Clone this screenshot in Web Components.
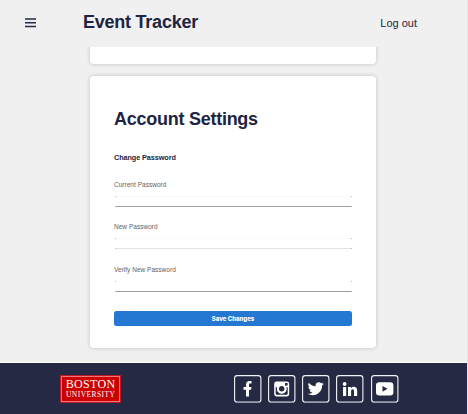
<!DOCTYPE html>
<html lang="en">
<head>
<meta charset="utf-8">
<title>Event Tracker</title>
<style>
html,body{margin:0;height:100%;overflow:hidden}
body{font-family:"Liberation Sans",Arial,sans-serif;color:#20243f;background:#f0f0f0}
</style>
</head>
<body>
<tracker-app></tracker-app>
<script>
function define(name, html, setup) {
  customElements.define(name, class extends HTMLElement {
    connectedCallback() {
      if (this.shadowRoot) return;
      this.attachShadow({mode: 'open'}).innerHTML = html;
      if (setup) setup(this, this.shadowRoot);
    }
  });
}

define('menu-icon', `<style>:host{display:block;width:11px;height:10px}svg{display:block}</style>
<svg width="11" height="10"><path d="M0 1h11M0 4.7h11M0 8.5h11" stroke="#252a46" stroke-width="1.6"/></svg>`);

define('top-bar', `<style>
:host{display:flex;align-items:center;box-sizing:border-box;height:47px;padding:0 50px 2px 25px;background:#f0f0f0}
h1{margin:0 auto 0 47px;font-size:18px;line-height:23px;letter-spacing:-.24px;white-space:nowrap}
a{font-size:11px;line-height:14px;white-space:nowrap}
</style><menu-icon></menu-icon><h1>Event Tracker</h1><a>Log out</a>`);

define('surface-card', `<style>
:host{display:block;box-sizing:border-box;width:286px;background:#fff;border-radius:4px;box-shadow:0 0 4px rgba(0,0,0,.2)}
</style><slot></slot>`);

define('password-field', `<style>
:host{display:block;height:42.7px}
label{display:block;font-size:6.5px;line-height:8px;letter-spacing:.02px;color:#636363;white-space:nowrap}
.box{box-sizing:border-box;height:11px;margin:7px 0 0 1px;border:solid;border-width:1px 0;border-color:var(--top,#f7f7f7) transparent var(--line,#a0a0a0);display:flex;flex-direction:column;justify-content:space-between}
.ends{display:flex;justify-content:space-between;margin-top:-1px}
.ends.low{margin:0 0 -1px}
i{width:1px;height:1px;background:#bbb}
</style><label></label><div class="box"><div class="ends"><i></i><i></i></div><div class="ends low"><i></i><i></i></div></div>`,
(el, root) => { root.querySelector('label').textContent = el.getAttribute('label'); });

define('save-button', `<style>
:host{display:block}
button{display:block;width:238px;height:15px;padding:1px 0 0;border:0;border-radius:2.5px;background:#2478d2;color:#fff;font:800 6px/14px Inter,sans-serif;}
</style><button><slot></slot></button>`);

define('account-form', `<style>
:host{display:block;padding:32px 24px 0}
h2{margin:0;font-size:18px;line-height:23px;letter-spacing:-.26px;white-space:nowrap}
h3{margin:21.500px 0 19px;font-size:7.3px;line-height:9px;letter-spacing:-.1px;white-space:nowrap}
.fields{height:130px}
</style><h2>Account Settings</h2><h3>Change Password</h3>
<div class="fields">
<password-field label="Current Password"></password-field>
<password-field label="New Password" style="--line:#e2e2e2;--top:#fafafa"></password-field>
<password-field label="Verify New Password" style="--top:#fff"></password-field>
</div><save-button>Save Changes</save-button>`);

define('university-logo', `<style>
:host{display:flex;flex-direction:column;align-items:center;box-sizing:border-box;width:61px;height:28px;background:#c00;border:1px solid #b91825;box-shadow:inset 0 0 0 1px #ef7777;color:#fff;font-family:"Liberation Serif",serif;white-space:nowrap}
b,span{font-weight:400;display:block}
b{font-size:12px;line-height:12px;margin-top:2px;letter-spacing:.35px;margin-right:-.35px}
span{font-size:7.5px;line-height:8px;margin-top:1px;letter-spacing:.45px;margin-right:-.45px}
</style><b>BOSTON</b><span>UNIVERSITY</span>`);

const glyphs = {
  facebook: '<path fill="#fff" d="M12 21.5V14.8H9.5V12H12V9.8c0-2.5 1.4-3.9 3.6-3.9h1.9v2.7H16c-.8 0-1 .5-1 1.2V12h2.5l-.4 2.8H15v6.7z"/>',
  instagram: '<rect x="6.2" y="6.4" width="15" height="15" rx="2.3" fill="#fff"/><path d="M7.7 12.300v6c0 1 .5 1.500 1.500 1.500h9c1 0 1.500-.5 1.500-1.500v-6h-1.500a4.800 4.800 0 1 1-9 0z" fill="#252943"/><circle cx="13.700" cy="13.800" r="3.700" fill="#252943" stroke="#fff" stroke-width="2"/><rect x="17" y="8" width="2.600" height="2.600" fill="#252943"/>',
  twitter: '<path transform="translate(5.7 5.7) scale(.67)" fill="#fff" d="M24 4.6a10 10 0 0 1-2.8.8 4.9 4.9 0 0 0 2.1-2.7 10 10 0 0 1-3.1 1.2 4.9 4.9 0 0 0-8.4 4.5A14 14 0 0 1 1.7 3.2a4.9 4.9 0 0 0 1.5 6.5 4.9 4.9 0 0 1-2.2-.6v.1a4.9 4.9 0 0 0 3.9 4.8 5 5 0 0 1-2.2.1 4.9 4.9 0 0 0 4.6 3.4A9.9 9.9 0 0 1 0 19.5a14 14 0 0 0 7.5 2.2c9.1 0 14-7.5 14-14v-.6A10 10 0 0 0 24 4.6z"/>',
  linkedin: '<g fill="#fff"><circle cx="8.6" cy="9" r="1.9"/><path d="M7 12h3.2v9H7zM12 12h3v1.3c.5-.9 1.5-1.5 2.7-1.5 2.7 0 3.5 1.7 3.5 4.3V21H18v-4.5c0-1.300-.3-2.200-1.400-2.200s-1.500.9-1.500 2.200V21H12z"/></g>',
  youtube: '<rect x="5" y="7.3" width="17.4" height="13.2" rx="3.3" fill="#fff"/><path d="M11.5 11v5.700l5-2.850z" fill="#252943"/>'
};
define('social-icon', `<style>
:host{display:block;width:28px;height:28px}svg{display:block}
</style><svg width="28" height="28"><rect x=".6" y=".6" width="26.3" height="26.6" rx="2.6" fill="none" stroke="#f4f4f7" stroke-width="1.1"/><path d="M2.500 27.200H25" stroke="#9a9da9" stroke-width="1.600"/><g></g></svg>`,
(el, root) => { root.querySelector('g').innerHTML = glyphs[el.getAttribute('name')]; });

define('page-footer', `<style>
:host{display:flex;justify-content:space-between;align-items:flex-start;box-sizing:border-box;height:52px;padding:12px 68.3px 0 60px;background:#252943;border-top:1px solid #fff}
nav{display:flex;gap:6.3px}
</style><university-logo></university-logo><nav>
<social-icon name="facebook"></social-icon><social-icon name="instagram"></social-icon><social-icon name="twitter"></social-icon><social-icon name="linkedin"></social-icon><social-icon name="youtube"></social-icon></nav>`);

define('tracker-app', `<style>
:host{display:grid;grid-template-rows:47px 315px 52px;width:467px;height:414px;border-right:1px solid #e4e4e4}
main{overflow:hidden;display:flex;flex-direction:column;gap:12px;padding-left:90px}
.previous{height:37px;margin-top:-20px;flex:none}
.account{height:272px;flex:none}
</style><top-bar></top-bar><main><surface-card class="previous"></surface-card><surface-card class="account"><account-form></account-form></surface-card></main><page-footer></page-footer>`);
</script>
</body>
</html>
